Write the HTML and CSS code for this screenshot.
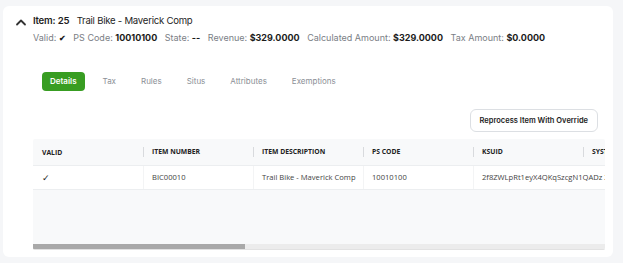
FILE: index.html
```html
<!DOCTYPE html>
<html lang="en">
<head>
    <meta charset="UTF-8">
    <title>Item 25 - Trail Bike</title>
    <link rel="stylesheet" href="styles.css">
</head>
<body>
    <div class="card">
        <div class="item-head">
            <svg class="chevron" width="12" height="8" viewBox="0 0 12 8">
                <path d="M2 6.5 L6 2.5 L10 6.5" fill="none" stroke="#333" stroke-width="1.8" stroke-linecap="round" stroke-linejoin="round"/>
            </svg>
            <div class="head-text">
                <div class="title">
                    <b>Item:</b> <b>25</b>
                    <span class="name">Trail Bike - Maverick Comp</span>
                </div>
                <div class="meta">
                    <span class="lbl">Valid:</span> <span class="val tick">&#10004;</span>
                    <span class="lbl">PS Code:</span> <span class="val">10010100</span>
                    <span class="lbl">State:</span> <span class="val">--</span>
                    <span class="lbl">Revenue:</span> <span class="val">$329.0000</span>
                    <span class="lbl">Calculated Amount:</span> <span class="val">$329.0000</span>
                    <span class="lbl">Tax Amount:</span> <span class="val">$0.0000</span>
                </div>
            </div>
        </div>

        <div class="tabs">
            <span class="tab active">Details</span>
            <span class="tab">Tax</span>
            <span class="tab">Rules</span>
            <span class="tab">Situs</span>
            <span class="tab">Attributes</span>
            <span class="tab">Exemptions</span>
        </div>

        <div class="actions">
            <button class="btn">Reprocess Item With Override</button>
        </div>

        <div class="grid">
            <div class="grid-row grid-header">
                <div class="cell">VALID</div>
                <div class="cell">ITEM NUMBER</div>
                <div class="cell">ITEM DESCRIPTION</div>
                <div class="cell">PS CODE</div>
                <div class="cell">KSUID</div>
                <div class="cell">SYSTEM</div>
            </div>
            <div class="grid-row grid-data">
                <div class="cell check">&#10003;</div>
                <div class="cell">BIC00010</div>
                <div class="cell">Trail Bike - Maverick Comp</div>
                <div class="cell">10010100</div>
                <div class="cell wide">2f8ZWLpRt1eyX4QKqSzcgN1QADz 2f8ZWLpRt1eyX4QK</div>
            </div>
            <div class="grid-empty"></div>
            <div class="scrollbar">
                <div class="thumb"></div>
            </div>
        </div>
    </div>
</body>
</html>
```

FILE: styles.css
```css
body {
    margin: 0;
    background: #f5f6f8;
    font-family: 'Inter', sans-serif;
    color: #222;
}
.card {
    margin: 6px 0 0 3px;
    width: 610px;
    height: 251px;
    box-sizing: border-box;
    background: #fff;
    border-radius: 6px;
    padding: 7px 0 0 12px;
}
.item-head {
    display: flex;
}
.chevron {
    width: 12px;
    margin: 5px 6px 0 0;
}
.title {
    font-size: 9.6px;
    letter-spacing: -0.25px;
    line-height: 16px;
    color: #1e1e1e;
}
.title b {
    font-weight: 600;
}
.name {
    margin-left: 5px;
}
.meta {
    margin-top: 2px;
    font-size: 9px;
    line-height: 14px;
    white-space: nowrap;
}
.lbl {
    color: #7a7e85;
}
.val {
    font-weight: 700;
    color: #1b1b1b;
    margin-right: 5px;
}
.tick {
    font-size: 7.5px;
}
.tabs {
    display: flex;
    align-items: center;
    margin: 26px 0 0 27px;
    gap: 25px;
}
.tab {
    font-size: 8px;
    color: #8b8f96;
    height: 19px;
    line-height: 19px;
}
.tab.active {
    background: #389d22;
    color: #fff;
    font-weight: 600;
    padding: 0 8px;
    border-radius: 4px;
    margin-right: -7px;
}
.actions {
    display: flex;
    justify-content: flex-end;
    margin: 18px 15px 0 0;
}
.btn {
    font-family: 'Inter', sans-serif;
    font-size: 7.5px;
    font-weight: 600;
    color: #222;
    background: #fff;
    border: 1px solid #dcdfe3;
    border-radius: 6px;
    padding: 0 9px;
    height: 23px;
}
.grid {
    margin: 7px 0 0 18px;
    width: 572px;
    background: #f8f9fa;
    overflow: hidden;
    border-radius: 2px;
    font-family: 'Open Sans', sans-serif;
    font-size: 7.6px;
}
.grid-row {
    display: flex;
    white-space: nowrap;
}
.cell {
    flex: 0 0 110px;
    box-sizing: border-box;
    padding-left: 9px;
    overflow: hidden;
}
.cell + .cell {
    padding-left: 8px;
}
.cell.wide {
    flex: 1 0 auto;
    overflow: visible;
}
.grid-header {
    height: 26px;
    align-items: center;
    font-size: 6.8px;
    font-weight: 700;
    color: #222;
    border-bottom: 1px solid #eceef0;
}
.grid-header .cell + .cell {
    border-left: 1px solid #d8dadd;
    height: 10px;
    line-height: 10px;
}
.grid-data {
    height: 23px;
    align-items: center;
    background: #fff;
    color: #444;
    border-bottom: 1px solid #eceef0;
}
.grid-data .cell {
    height: 23px;
    line-height: 23px;
}
.grid-data .cell + .cell {
    border-left: 1px solid #f3f4f5;
}
.grid-data .check {
    color: #222;
    font-size: 8.5px;
}
.grid-empty {
    height: 54px;
}
.scrollbar {
    height: 5px;
    background: #ececec;
    border-bottom: 1px solid #e2e2e2;
}
.thumb {
    width: 212px;
    height: 5px;
    background: #a9a9a9;
}
```
